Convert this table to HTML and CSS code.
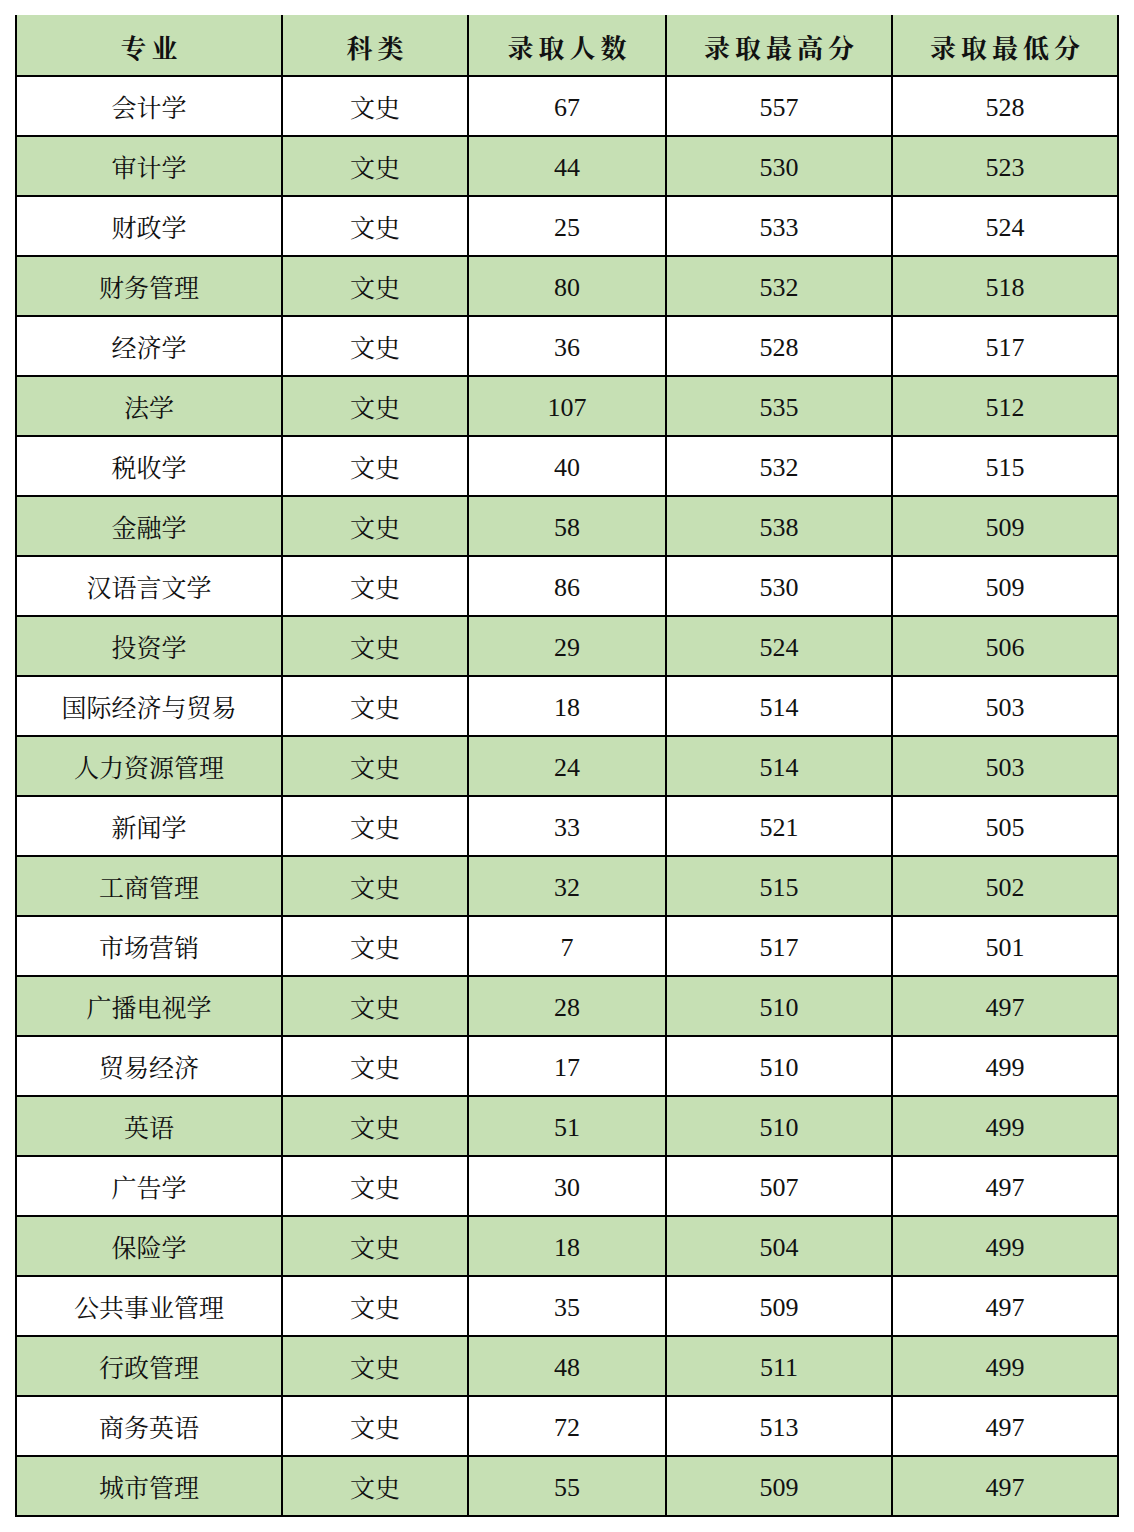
FILE: index.html
```html
<!DOCTYPE html>
<html lang="zh-CN">
<head>
<meta charset="utf-8">
<title>录取分数</title>
<link rel="stylesheet" href="styles.css">
</head>
<body>
<table class="score-table">
  <colgroup>
    <col class="c1"><col class="c2"><col class="c3"><col class="c4"><col class="c5">
  </colgroup>
  <thead>
    <tr class="head"><th>专业</th><th>科类</th><th>录取人数</th><th>录取最高分</th><th>录取最低分</th></tr>
  </thead>
  <tbody>
    <tr><td>会计学</td><td>文史</td><td>67</td><td>557</td><td>528</td></tr>
    <tr class="alt"><td>审计学</td><td>文史</td><td>44</td><td>530</td><td>523</td></tr>
    <tr><td>财政学</td><td>文史</td><td>25</td><td>533</td><td>524</td></tr>
    <tr class="alt"><td>财务管理</td><td>文史</td><td>80</td><td>532</td><td>518</td></tr>
    <tr><td>经济学</td><td>文史</td><td>36</td><td>528</td><td>517</td></tr>
    <tr class="alt"><td>法学</td><td>文史</td><td>107</td><td>535</td><td>512</td></tr>
    <tr><td>税收学</td><td>文史</td><td>40</td><td>532</td><td>515</td></tr>
    <tr class="alt"><td>金融学</td><td>文史</td><td>58</td><td>538</td><td>509</td></tr>
    <tr><td>汉语言文学</td><td>文史</td><td>86</td><td>530</td><td>509</td></tr>
    <tr class="alt"><td>投资学</td><td>文史</td><td>29</td><td>524</td><td>506</td></tr>
    <tr><td>国际经济与贸易</td><td>文史</td><td>18</td><td>514</td><td>503</td></tr>
    <tr class="alt"><td>人力资源管理</td><td>文史</td><td>24</td><td>514</td><td>503</td></tr>
    <tr><td>新闻学</td><td>文史</td><td>33</td><td>521</td><td>505</td></tr>
    <tr class="alt"><td>工商管理</td><td>文史</td><td>32</td><td>515</td><td>502</td></tr>
    <tr><td>市场营销</td><td>文史</td><td>7</td><td>517</td><td>501</td></tr>
    <tr class="alt"><td>广播电视学</td><td>文史</td><td>28</td><td>510</td><td>497</td></tr>
    <tr><td>贸易经济</td><td>文史</td><td>17</td><td>510</td><td>499</td></tr>
    <tr class="alt"><td>英语</td><td>文史</td><td>51</td><td>510</td><td>499</td></tr>
    <tr><td>广告学</td><td>文史</td><td>30</td><td>507</td><td>497</td></tr>
    <tr class="alt"><td>保险学</td><td>文史</td><td>18</td><td>504</td><td>499</td></tr>
    <tr><td>公共事业管理</td><td>文史</td><td>35</td><td>509</td><td>497</td></tr>
    <tr class="alt"><td>行政管理</td><td>文史</td><td>48</td><td>511</td><td>499</td></tr>
    <tr><td>商务英语</td><td>文史</td><td>72</td><td>513</td><td>497</td></tr>
    <tr class="alt"><td>城市管理</td><td>文史</td><td>55</td><td>509</td><td>497</td></tr>
  </tbody>
</table>
</body>
</html>
```
FILE: styles.css
```css
html, body {
  margin: 0;
  padding: 0;
  background: #ffffff;
}

body {
  padding: 15px 0 0 15px;
}

.score-table {
  border-collapse: collapse;
  table-layout: fixed;
  width: 1104px;
  font-family: "Liberation Serif", "Noto Serif CJK SC", "Noto Sans CJK SC", serif;
  color: #111;
}

.c1 { width: 266px; }
.c2 { width: 186px; }
.c3 { width: 198px; }
.c4 { width: 226px; }
.c5 { width: 226px; }

.score-table th,
.score-table td {
  border: 2px solid #000;
  text-align: center;
  vertical-align: middle;
  padding: 0;
}

.score-table thead th {
  border-top: 0;
  height: 58px;
  padding-top: 2px;
  background: #c6e0b4;
  font-size: 26px;
  font-weight: bold;
  letter-spacing: 5px;
  text-indent: 5px;
}

.score-table tbody td {
  height: 58px;
  font-size: 25px;
  font-weight: normal;
}

.score-table tbody td:nth-child(n+3) {
  font-size: 26px;
  line-height: 30px;
  padding-top: 4px;
  height: 54px;
}

.score-table tbody tr.alt td {
  background: #c6e0b4;
}
```
